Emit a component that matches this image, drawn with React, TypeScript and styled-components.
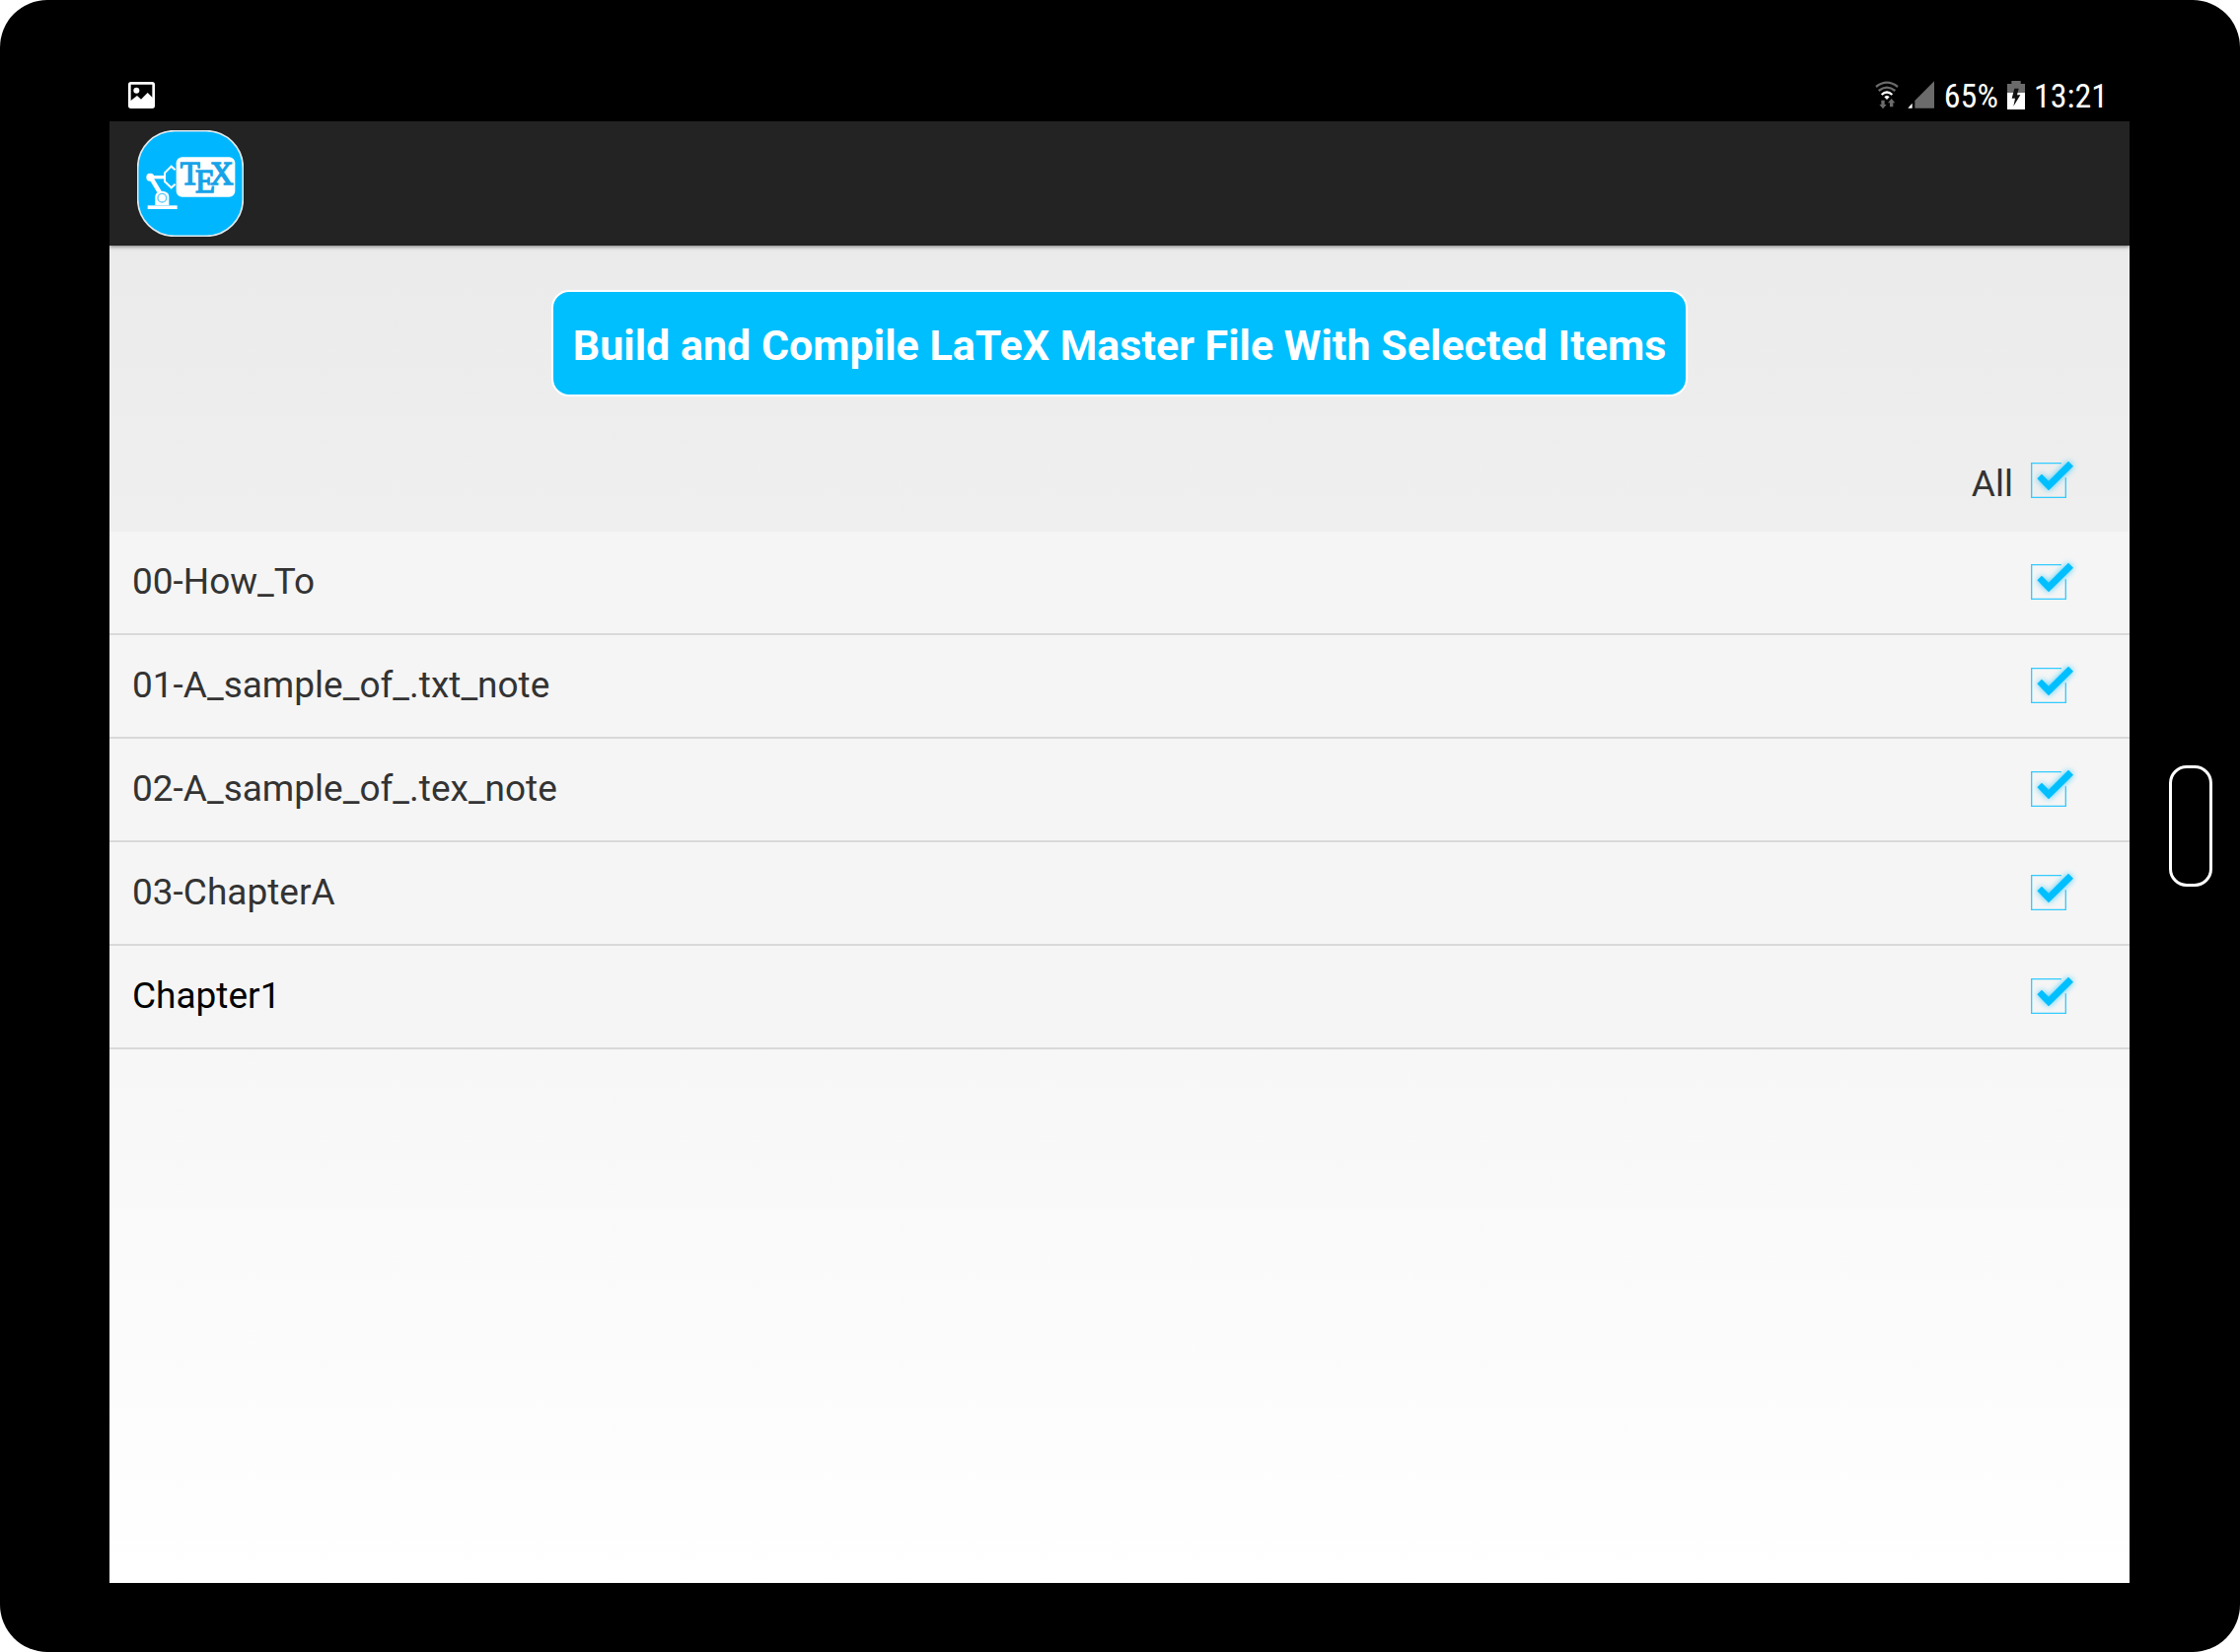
import React, { useState } from "react";
import styled, { createGlobalStyle } from "styled-components";

const GlobalStyle = createGlobalStyle`
  *, *::before, *::after { box-sizing: border-box; }
  body {
    margin: 0;
    background: #fff;
    font-family: Roboto, "Liberation Sans", sans-serif;
  }
`;

const Device = styled.div`
  display: grid;
  grid-template-columns: minmax(0, 1fr) 112px;
  min-height: 100vh;
  padding: 69px 0 70px 111px;
  background: #000;
  border-radius: 48px;
`;

const Screen = styled.div`
  display: flex;
  flex-direction: column;
  background: linear-gradient(#e8e8e8, #fff);
`;

const SideBezel = styled.div`
  display: flex;
  align-items: center;
  padding-left: 40px;
`;

const HomeButton = styled.button`
  width: 44px;
  height: 123px;
  padding: 0;
  border: 3px solid #fff;
  border-radius: 18px;
  background: transparent;
`;

const StatusBar = styled.div`
  display: flex;
  align-items: center;
  justify-content: space-between;
  height: 54px;
  padding: 0 22px 0 19px;
  background: #000;
  color: #fff;
`;

const StatusGroup = styled.div`
  display: flex;
  align-items: center;
  gap: 9px;
`;

const StatusText = styled.span`
  padding-top: 2px;
  font-family: "Roboto Condensed", Roboto, sans-serif;
  font-size: 34px;
  line-height: 52px;
`;

const Icon = styled.svg`
  display: block;
  flex: none;
`;

const AppBar = styled.header`
  display: flex;
  align-items: center;
  height: 126px;
  padding-left: 28px;
  background: #232323;
  box-shadow: 0 1px 4px rgba(0, 0, 0, 0.5);
`;

const Main = styled.main`
  display: flex;
  flex-direction: column;
`;

const Actions = styled.div`
  display: flex;
  justify-content: center;
  padding-top: 45px;
`;

const BuildButton = styled.button`
  height: 108px;
  padding: 4px 20px 0;
  border: 2px solid #fff;
  border-radius: 18px;
  background: #00bfff;
  color: #fff;
  font-family: inherit;
  font-size: 43px;
  font-weight: 700;
  line-height: 48px;
`;

const SelectAll = styled.label`
  display: flex;
  align-items: center;
  justify-content: flex-end;
  height: 137px;
  padding: 32px 46px 0 23px;
  color: #333;
  font-size: 37px;
  line-height: 44px;
`;

const AllText = styled.span`
  padding-top: 8px;
`;

const List = styled.ul`
  margin: 0;
  padding: 0;
  list-style: none;
`;

const Row = styled.li`
  border-bottom: 2px solid #d9d9d9;
  background: #f5f5f5;
`;

const RowLabel = styled.label<{ $strong?: boolean }>`
  display: flex;
  align-items: center;
  justify-content: space-between;
  height: 103px;
  padding: 0 46px 2px 23px;
  color: ${(p) => (p.$strong ? "#000" : "#333")};
  font-size: 37px;
  line-height: 44px;
`;

const CheckStack = styled.span`
  display: grid;
  flex: none;
  width: 72px;
  height: 72px;

  > * { grid-area: 1 / 1; }
`;

const CheckInput = styled.input`
  width: 72px;
  height: 72px;
  margin: 0;
  opacity: 0;
`;

const CheckArt = styled.svg`
  width: 72px;
  height: 72px;
  pointer-events: none;
  overflow: visible;

  .glow {
    filter: blur(10px);
    opacity: 0.75;
  }
`;

const TICK = "73,103 87,89 108,110 168,50 183,65 108,139";

function CheckBox({ checked, onChange }: { checked: boolean; onChange: () => void }) {
  return (
    <CheckStack>
      <CheckInput type="checkbox" checked={checked} onChange={onChange} />
      <CheckArt viewBox="0 0 216 216" aria-hidden="true">
        {checked ? (
          <>
            <polygon className="glow" points={TICK} fill="#00bfff" />
            <path d="M147 56H56V160H160V100" fill="none" stroke="#33cbff" strokeWidth="4" />
            <polygon points={TICK} fill="#00bfff" />
          </>
        ) : (
          <rect x="56" y="56" width="104" height="104" fill="none" stroke="#33cbff" strokeWidth="4" />
        )}
      </CheckArt>
    </CheckStack>
  );
}

function PictureIcon() {
  return (
    <Icon width="27" height="27" viewBox="0 0 81 81" aria-hidden="true">
      <rect x="4" y="4" width="73" height="73" rx="4" fill="none" stroke="#fff" strokeWidth="8" />
      <circle cx="25" cy="26" r="9" fill="#fff" />
      <path d="M4 60L27 42L39 53L59 33L77 51V77H4Z" fill="#fff" />
    </Icon>
  );
}

function WifiIcon() {
  return (
    <Icon width="24" height="29" viewBox="0 0 72 87" aria-hidden="true">
      <g fill="none" strokeWidth="7">
        <path d="M3 18Q36 -8 69 18" stroke="#6b6b6b" />
        <path d="M11 30Q36 10 61 30" stroke="#6b6b6b" />
        <path d="M20 42Q36 27 52 42" stroke="#fff" />
      </g>
      <path d="M28 49Q36 41 44 49L36 57Z" fill="#fff" />
      <path d="M19 59H29V72H35L24 85L13 72H19Z" fill="#6b6b6b" />
      <path d="M45 79H55V67H61L50 54L39 67H45Z" fill="#6b6b6b" />
    </Icon>
  );
}

function SignalIcon() {
  return (
    <Icon width="28" height="28" viewBox="0 0 84 84" aria-hidden="true">
      <path d="M1 83L14 68V83Z" fill="#fff" />
      <path d="M22 83V60L81 1V83Z" fill="#6b6b6b" />
    </Icon>
  );
}

function BatteryIcon() {
  return (
    <Icon width="18" height="29" viewBox="0 0 54 87" aria-hidden="true">
      <path d="M0 9H13V0H41V9H54V36H0Z" fill="#6b6b6b" />
      <path d="M0 36H54V87H0Z" fill="#fff" />
      <path d="M22 23H35L30 43H40L19 77L24 53H14Z" fill="#111" />
    </Icon>
  );
}

function AppLogo() {
  return (
    <Icon width="108" height="108" viewBox="0 0 324 324" role="img" aria-label="TeX robot">
      <rect x="2" y="2" width="320" height="320" rx="112" fill="#00b7ff" stroke="#e0e8ec" strokeWidth="5" />
      <rect x="119" y="82" width="179" height="121" rx="18" fill="#fff" />
      <g fill="#fff">
        <circle cx="40" cy="143" r="12" />
        <path d="M40 138H84V148H40Z" />
        <path d="M39 152L50 145L76 188L64 194Z" />
        <path d="M55 228V201A21 16 0 0 1 97 201V228Z" />
        <path d="M32 229H122V240H32Z" />
      </g>
      <circle cx="76" cy="206" r="13" fill="#fff" stroke="#5ccbfb" strokeWidth="4" />
      <path d="M116 121L104 110L84 130V156L104 175L116 164" fill="none" stroke="#fff" strokeWidth="6" />
      <text
        x="131"
        y="164"
        fill="#16a3e8"
        stroke="#16a3e8"
        strokeWidth="4"
        fontFamily='"Liberation Serif", serif'
        fontSize="98"
      >
        T<tspan dx="-14" dy="24">E</tspan><tspan dx="-15" dy="-24">X</tspan>
      </text>
    </Icon>
  );
}

const FILES = [
  { name: "00-How_To" },
  { name: "01-A_sample_of_.txt_note" },
  { name: "02-A_sample_of_.tex_note" },
  { name: "03-ChapterA" },
  { name: "Chapter1", strong: true },
];

export default function App() {
  const [picked, setPicked] = useState<boolean[]>(FILES.map(() => true));
  const all = picked.every(Boolean);

  return (
    <>
      <GlobalStyle />
      <Device>
        <Screen>
          <StatusBar>
            <PictureIcon />
            <StatusGroup>
              <WifiIcon />
              <SignalIcon />
              <StatusText>65%</StatusText>
              <BatteryIcon />
              <StatusText>13:21</StatusText>
            </StatusGroup>
          </StatusBar>
          <AppBar>
            <AppLogo />
          </AppBar>
          <Main>
            <Actions>
              <BuildButton type="button">Build and Compile LaTeX Master File With Selected Items</BuildButton>
            </Actions>
            <SelectAll>
              <AllText>All</AllText>
              <CheckBox checked={all} onChange={() => setPicked(FILES.map(() => !all))} />
            </SelectAll>
            <List>
              {FILES.map((file, i) => (
                <Row key={file.name}>
                  <RowLabel $strong={file.strong}>
                    <span>{file.name}</span>
                    <CheckBox
                      checked={picked[i]}
                      onChange={() => setPicked(picked.map((v, j) => (j === i ? !v : v)))}
                    />
                  </RowLabel>
                </Row>
              ))}
            </List>
          </Main>
        </Screen>
        <SideBezel>
          <HomeButton type="button" aria-label="Home" />
        </SideBezel>
      </Device>
    </>
  );
}
